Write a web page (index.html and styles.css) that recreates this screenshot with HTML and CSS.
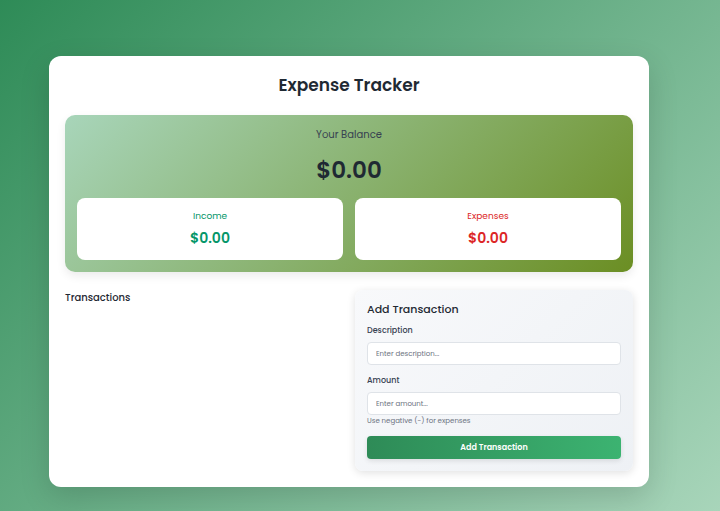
FILE: index.html
```html
<!DOCTYPE html>
<html lang="en">
<head>
<meta charset="utf-8">
<title>Expense Tracker</title>
<link rel="stylesheet" href="styles.css">
</head>
<body>
<main class="card">
  <h1 class="title">Expense Tracker</h1>
  <section class="balance">
    <div class="balance-label">Your Balance</div>
    <div class="balance-value">$0.00</div>
    <div class="summary">
      <div class="sum-box">
        <div class="sum-label income">Income</div>
        <div class="sum-value income">$0.00</div>
      </div>
      <div class="sum-box">
        <div class="sum-label expense">Expenses</div>
        <div class="sum-value expense">$0.00</div>
      </div>
    </div>
  </section>
  <section class="lower">
    <div class="transactions">
      <h3 class="tx-title">Transactions</h3>
    </div>
    <div class="form-panel">
      <h3 class="form-title">Add Transaction</h3>
      <label class="field-label">Description</label>
      <input class="field" type="text" placeholder="Enter description...">
      <label class="field-label second">Amount</label>
      <input class="field" type="text" placeholder="Enter amount...">
      <div class="hint">Use negative (−) for expenses</div>
      <button class="btn">Add Transaction</button>
    </div>
  </section>
</main>
</body>
</html>
```
FILE: styles.css
```css
* { box-sizing: border-box; }
html, body { margin: 0; height: 100%; }
body {
  font-family: "Poppins", "Open Sans", "Noto Sans", sans-serif;
  background: linear-gradient(135deg, #2e8b57 0%, #a8d5ba 100%);
  padding: 56px 0 0 49px;
  color: #1f2933;
}
.card {
  width: 600px;
  background: #fff;
  border-radius: 12px;
  padding: 16px;
  box-shadow: 0 10px 30px rgba(0,0,0,0.15);
}
.title {
  margin: 0;
  text-align: center;
  font-size: 17px;
  font-weight: 600;
  line-height: 26px;
  padding: 0 0 17px;
  color: #1f2933;
}
.balance {
  background: linear-gradient(135deg, #a8d5ba 0%, #6b8e23 100%);
  border-radius: 10px;
  padding: 12px;
  text-align: center;
  box-shadow: 0 4px 10px rgba(0,0,0,0.08);
}
.balance-label { font-size: 10px; line-height: 14px; color: #374151; margin-top: 1px; }
.balance-value { font-size: 23px; font-weight: 600; line-height: 34px; margin: 11px 0 11px; color: #1f2933; }
.summary { display: grid; grid-template-columns: 1fr 1fr; gap: 12px; }
.sum-box { background: #fff; border-radius: 8px; padding: 11px 8px 12px; }
.sum-label { font-size: 9px; line-height: 14px; }
.sum-value { font-size: 14px; font-weight: 600; line-height: 20px; margin-top: 5px; }
.income { color: #059669; }
.expense { color: #dc2626; }
.lower { display: grid; grid-template-columns: 1fr 1fr; gap: 12px; margin-top: 19px; align-items: start; }
.tx-title { margin: 0; padding-top: 0; font-size: 10px; font-weight: 500; line-height: 14px; color: #1f2933; }
.transactions { padding-top: 0; }
.form-panel {
  background: linear-gradient(135deg, #f8f9fb 0%, #eef1f5 100%);
  border-radius: 8px;
  padding: 12px 12px 12px;
  box-shadow: 0 2px 8px rgba(0,0,0,0.12);
  display: flex;
  flex-direction: column;
  margin-top: -1px;
}
.form-title { margin: 0 0 8px; font-size: 11px; font-weight: 500; line-height: 15px; color: #1f2933; }
.field-label { font-size: 8px; font-weight: 500; line-height: 12px; color: #374151; margin-bottom: 5px; }
.field-label.second { margin-top: 10px; }
.field {
  height: 23px;
  border: 1px solid #dfe3e8;
  border-radius: 4px;
  background: #fff;
  font-family: inherit;
  font-size: 7px;
  padding: 0 8px;
  outline: none;
}
.field::placeholder { color: #6b7280; }
.hint { font-size: 7px; line-height: 10px; color: #6b7280; margin-top: 1px; }
.btn {
  margin-top: 10px;
  height: 23px;
  border: 0;
  border-radius: 4px;
  background: linear-gradient(90deg, #2e8b57 0%, #3cb371 100%);
  color: #fff;
  font-family: inherit;
  font-size: 8px;
  font-weight: 600;
  box-shadow: 0 2px 5px rgba(0,0,0,0.1);
}
```
